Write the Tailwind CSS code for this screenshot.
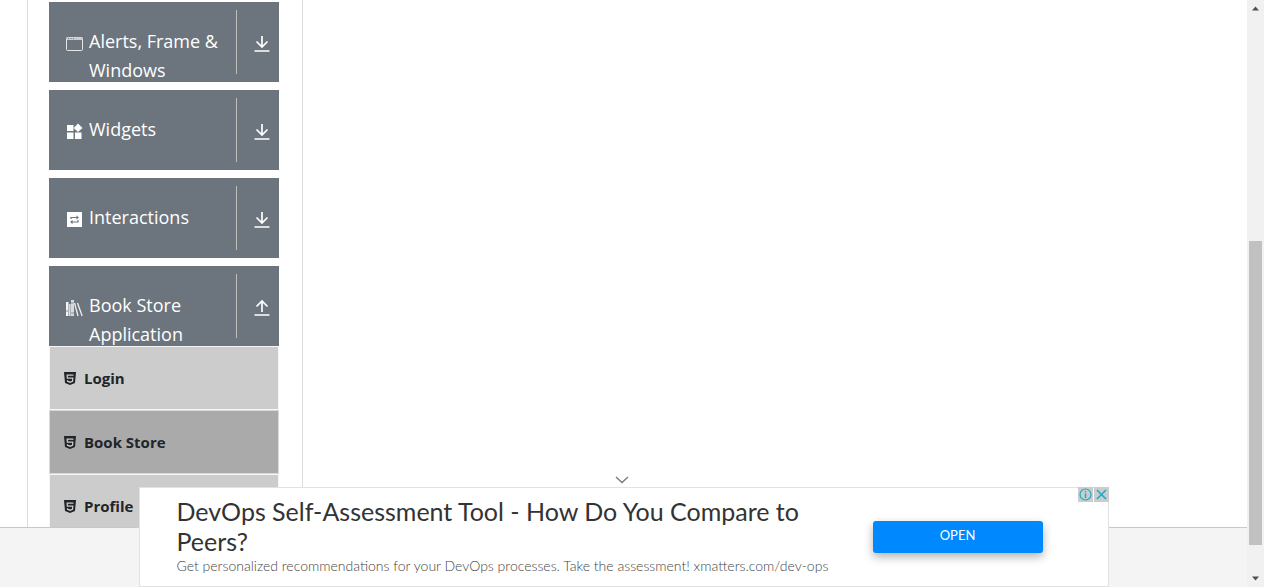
<!DOCTYPE html>
<html lang="en">
<head>
<meta charset="utf-8">
<title>Book Store</title>
<script src="https://cdn.jsdelivr.net/npm/@tailwindcss/browser@4"></script>
</head>
<body class="flex h-screen overflow-hidden bg-white font-['Open_Sans','Noto_Sans',sans-serif] text-[#212529]">
<svg class="hidden">
  <symbol id="down" viewBox="0 0 16 18"><path d="M8 1v11M2.500 6.500 8 12l5.500-5.500M.5 16h15" fill="none" stroke="#fff" stroke-width="1.700"/></symbol>
  <symbol id="up" viewBox="0 0 16 18"><path d="M8 13V2M2.500 7.500 8 2l5.500 5.500M.5 16h15" fill="none" stroke="#fff" stroke-width="1.700"/></symbol>
  <symbol id="html5" viewBox="0 0 12 13"><path d="M0 0h12l-1 11-5 2-5-2z" fill="#212529"/><path d="M9.500 3.200H3.200L3.400 6.200H8.800L8.500 9.300 6 10.200 3.600 9.300 3.500 8.200" fill="none" stroke="#ccc" stroke-width="1.300"/></symbol>
</svg>

<div class="relative flex min-w-0 flex-1 flex-col">
  <main class="flex min-h-0 flex-1 overflow-hidden pl-[27px]">
    <nav class="w-[276px] shrink-0 border-x border-[#dcdcdc] pl-[21px] pr-[23px] pt-[2px]">
      <div class="flex flex-col gap-2">
        <button class="flex h-20 w-full items-start overflow-hidden bg-[#6c757d] pl-4 text-left text-white">
          <svg class="mt-[33px] h-[18px] w-[18px] shrink-0" viewBox="0 0 18 18"><rect x="1.500" y="2.500" width="16" height="13" rx="1" fill="none" stroke="#e4e6e8"/><path d="M1.500 2.500h16v2.500h-16z" fill="#c9ccd0"/><path d="M3 3.500h1m1.500 0h1m1.500 0h1" stroke="#6c757d"/></svg>
          <span class="ml-[6px] mt-[25px] flex-1 text-[18px] leading-[29px]">Alerts, Frame &amp; Windows</span>
          <span class="mt-2 flex h-16 w-[43px] items-center justify-center border-l border-[#bfbfb8] pl-2"><svg class="mt-1 h-[18px] w-4"><use href="#down"/></svg></span>
        </button>
        <button class="flex h-20 w-full items-start overflow-hidden bg-[#6c757d] pl-4 text-left text-white">
          <svg class="mt-[33px] h-[18px] w-[18px] shrink-0" viewBox="0 0 18 18" fill="#fff"><path d="M2 2h6.500v6H2zM2 9.500h6.500V16H2zM10 9.500h6.500V16H10zM13 .5 17.500 5 13 9 8.700 5z"/></svg>
          <span class="ml-[6px] mt-[25px] flex-1 text-[18px] leading-[29px]">Widgets</span>
          <span class="mt-2 flex h-16 w-[43px] items-center justify-center border-l border-[#bfbfb8] pl-2"><svg class="mt-1 h-[18px] w-4"><use href="#down"/></svg></span>
        </button>
        <button class="flex h-20 w-full items-start overflow-hidden bg-[#6c757d] pl-4 text-left text-white">
          <svg class="mt-[33px] h-[18px] w-[18px] shrink-0" viewBox="0 0 18 18"><path d="M2 1h15v15H2z" fill="#fff"/><path d="M6 8V6.500h6M13 9v2H7" fill="none" stroke="#6c757d" stroke-width="1.200"/><path d="M11.500 4.300 13.800 6.500l-2.300 2.200zM7.500 8.800 5.200 11l2.300 2.200z" fill="#6c757d"/></svg>
          <span class="ml-[6px] mt-[25px] flex-1 text-[18px] leading-[29px]">Interactions</span>
          <span class="mt-2 flex h-16 w-[43px] items-center justify-center border-l border-[#bfbfb8] pl-2"><svg class="mt-1 h-[18px] w-4"><use href="#down"/></svg></span>
        </button>
        <button class="flex h-20 w-full items-start overflow-hidden bg-[#6c757d] pl-4 text-left text-white">
          <svg class="mt-[33px] h-[18px] w-[18px] shrink-0" viewBox="0 0 18 18"><path d="M1 3h2.500v14H1zM4.200 5h1.300v12H4.200z" fill="#f4f5f5"/><path d="M6 1h3v16H6z" fill="#d8dadc"/><path d="M1 12h2.500M6 4h3M6 14h3" stroke="#8b9299"/><path d="m9.500 4 3.500 13M12.500 4l4.700 13" stroke="#eee" stroke-width="1.300"/></svg>
          <span class="ml-[6px] mt-[25px] flex-1 text-[18px] leading-[29px]">Book Store Application</span>
          <span class="mt-2 flex h-16 w-[43px] items-center justify-center border-l border-[#bfbfb8] pl-2"><svg class="mt-1 h-[18px] w-4"><use href="#up"/></svg></span>
        </button>
      </div>
      <ul class="text-[15px] font-bold">
        <li><a href="#login" class="flex h-16 items-center gap-2 border border-[#f5f6f7] bg-[#ccc] pl-[14px]"><svg class="h-[13px] w-3"><use href="#html5"/></svg>Login</a></li>
        <li><a href="#books" class="flex h-16 items-center gap-2 border border-[#d5dade] bg-[#aaa] pl-[14px]"><svg class="h-[13px] w-3"><use href="#html5"/></svg>Book Store</a></li>
        <li><a href="#profile" class="flex h-16 items-center gap-2 border border-[#f5f6f7] bg-[#ccc] pl-[14px]"><svg class="h-[13px] w-3"><use href="#html5"/></svg>Profile</a></li>
      </ul>
    </nav>
  </main>
  <footer class="h-[60px] shrink-0 border-t border-[#c8c8c8] bg-[#f4f4f4]"></footer>

  <div class="absolute inset-x-0 bottom-0 flex flex-col items-center">
    <button aria-label="Collapse advertisement" class="mb-[3px] mr-[3px] flex h-2"><svg class="h-2 w-[14px]" viewBox="0 0 14 8"><path d="m1 1 6 5.500L13 1" fill="none" stroke="#777" stroke-width="1.300"/></svg></button>
    <section class="relative flex h-[100px] w-[970px] max-w-full border border-[#e2e2e2] bg-white pl-[37px] font-[Lato,sans-serif]">
      <div class="w-[696px] pt-2">
        <h2 class="w-[660px] text-[25px] leading-[30px] text-[#333]">DevOps Self-Assessment Tool - How Do You Compare to Peers?</h2>
        <p class="mt-[1px] whitespace-nowrap text-[14px] font-light leading-[18px] text-[#444]">Get personalized recommendations for your DevOps processes. Take the assessment! xmatters.com/dev-ops</p>
      </div>
      <button class="mt-[33px] h-8 w-[170px] rounded-[3px] bg-[#08f] pb-[2px] text-[13px] text-white shadow-[0_4px_10px_rgba(0,0,0,0.3)]">OPEN</button>
      <div class="absolute -right-px -top-px flex gap-px">
        <button aria-label="Ad information" class="h-[15px] w-[15px] bg-[#ccc]"><svg viewBox="0 0 15 15" fill="none" stroke="#12aecb" stroke-width="1.200"><circle cx="7.500" cy="7.500" r="5.500"/><path d="M7.500 6.500V11M7.500 4v1.300" stroke-width="1.500"/></svg></button>
        <button aria-label="Close advertisement" class="h-[15px] w-[15px] bg-[#ccc]"><svg viewBox="0 0 15 15" fill="none" stroke="#12aecb" stroke-width="1.500"><path d="m3 3 9 9M12 3l-9 9"/></svg></button>
      </div>
    </section>
  </div>
</div>

<div class="flex w-[17px] shrink-0 flex-col items-center bg-[#f1f1f1] py-[6px]" aria-hidden="true">
  <svg class="h-[5px] w-[7px]" viewBox="0 0 7 5"><path d="M0 4.500h7L3.500.5z" fill="#505050"/></svg>
  <div class="flex-[230]"></div>
  <div class="w-[13px] flex-[303] bg-[#c1c1c1]"></div>
  <div class="flex-[31]"></div>
  <svg class="h-[5px] w-[7px]" viewBox="0 0 7 5"><path d="M0 .5h7l-3.500 4z" fill="#505050"/></svg>
</div>
</body>
</html>
